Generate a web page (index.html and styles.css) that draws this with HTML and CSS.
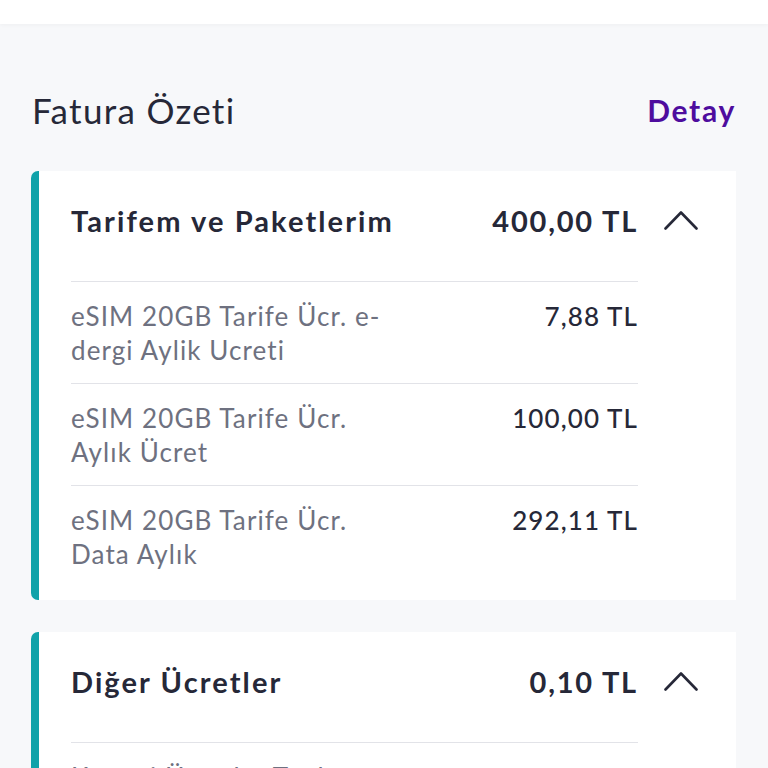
FILE: index.html
```html
<!DOCTYPE html>
<html lang="tr">
<head>
    <meta charset="UTF-8">
    <meta name="viewport" content="width=device-width, initial-scale=1.0">
    <title>Fatura Özeti</title>
    <link rel="stylesheet" href="styles.css">
</head>
<body>
    <div class="top-bar"></div>

    <main class="page">
        <div class="section-head">
            <h1>Fatura Özeti</h1>
            <a href="#" class="detail-link">Detay</a>
        </div>

        <div class="card">
            <div class="card-head">
                <h2>Tarifem ve Paketlerim</h2>
                <span class="card-total">400,00 TL</span>
                <svg class="chevron" width="34" height="20" viewBox="0 0 34 20">
                    <polyline points="1.5,18.5 17,2.5 32.5,18.5" fill="none" stroke="#262838" stroke-width="2.6" stroke-linecap="round" stroke-linejoin="round"/>
                </svg>
            </div>
            <div class="item-list">
                <div class="item">
                    <span class="item-name">eSIM 20GB Tarife Ücr. e-dergi Aylik Ucreti</span>
                    <span class="item-price">7,88 TL</span>
                </div>
                <div class="item">
                    <span class="item-name">eSIM 20GB Tarife Ücr. Aylık Ücret</span>
                    <span class="item-price">100,00 TL</span>
                </div>
                <div class="item">
                    <span class="item-name">eSIM 20GB Tarife Ücr. Data Aylık</span>
                    <span class="item-price">292,11 TL</span>
                </div>
            </div>
        </div>

        <div class="card">
            <div class="card-head">
                <h2>Diğer Ücretler</h2>
                <span class="card-total">0,10 TL</span>
                <svg class="chevron" width="34" height="20" viewBox="0 0 34 20">
                    <polyline points="1.5,18.5 17,2.5 32.5,18.5" fill="none" stroke="#262838" stroke-width="2.6" stroke-linecap="round" stroke-linejoin="round"/>
                </svg>
            </div>
            <div class="item-list">
                <div class="item">
                    <span class="item-name">Kanuni Ücretler Toplamı</span>
                    <span class="item-price">0,10 TL</span>
                </div>
            </div>
        </div>
    </main>
</body>
</html>
```

FILE: styles.css
```css
body {
    margin: 0;
    padding: 0;
    background-color: #f7f8fa;
    font-family: Lato, "Noto Sans", sans-serif;
    color: #262838;
}
.top-bar {
    height: 24px;
    background: white;
    box-shadow: 0 1px 4px rgba(0,0,0,0.04);
}
.page {
    padding: 66px 32px 0 31px;
}
.section-head {
    display: flex;
    justify-content: space-between;
    align-items: center;
    height: 40px;
    margin-bottom: 41px;
    padding-left: 1px;
}
.section-head h1 {
    margin: 0;
    font-size: 35px;
    font-weight: 400;
    letter-spacing: 1.3px;
}
.detail-link {
    color: #4e0d9e;
    font-size: 30px;
    font-weight: 700;
    letter-spacing: 1.7px;
    text-decoration: none;
}
.card {
    background: white;
    border-left: 8px solid #10a2a9;
    border-radius: 7px 0 0 7px;
    padding: 0 38px 13px 32px;
    margin-bottom: 32px;
}
.card-head {
    display: flex;
    align-items: center;
    height: 36px;
    padding: 31px 0 43px;
}
.card-head h2 {
    flex: 1;
    margin: 0;
    font-size: 29px;
    font-weight: 700;
    letter-spacing: 2.1px;
}
.card-total {
    font-size: 29px;
    font-weight: 700;
    letter-spacing: 1.8px;
}
.chevron {
    margin-left: 26px;
    flex-shrink: 0;
}
.item-list {
    margin-right: 60px;
}
.item {
    display: flex;
    justify-content: space-between;
    align-items: flex-start;
    gap: 40px;
    border-top: 1px solid #e2e3e8;
    padding: 17px 0 16px;
    font-size: 26px;
    line-height: 34px;
    letter-spacing: 1.1px;
}
.item-name {
    color: #6e7180;
    max-width: 330px;
}
.item-price {
    font-weight: 500;
    white-space: nowrap;
}
```
